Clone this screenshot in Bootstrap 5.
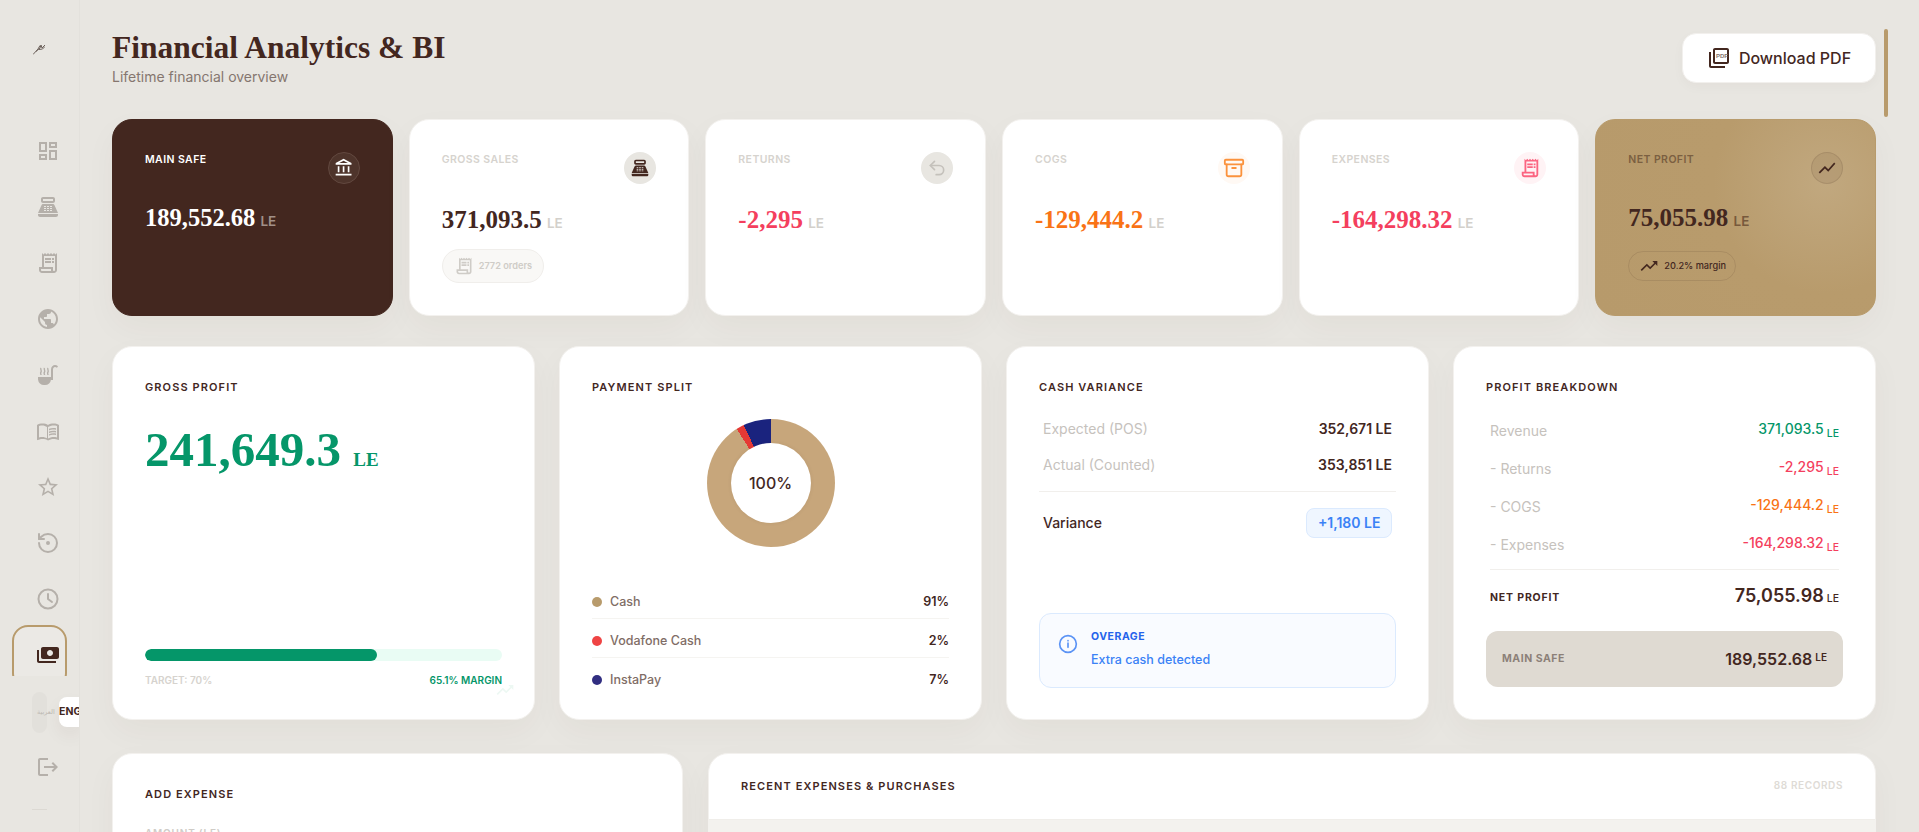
<!DOCTYPE html>
<html lang="en">
<head>
  <meta charset="UTF-8">
  <meta name="viewport" content="width=device-width, initial-scale=1.0">
  <title>Financial Analytics &amp; BI</title>
  <link href="https://cdn.jsdelivr.net/npm/bootstrap@5.3.0/dist/css/bootstrap.min.css" rel="stylesheet">
  <script src="https://cdn.jsdelivr.net/npm/bootstrap@5.3.0/dist/js/bootstrap.bundle.min.js"></script>
  <style>
    html, body { height: 832px; overflow: hidden; }
    body { background: #e8e6e1; color: #43271f; font-family: Inter, "Liberation Sans", sans-serif; }
    svg { display: block; flex: none; }
    .fill-icon { fill: currentColor; }
    .line-icon { fill: none; stroke: currentColor; stroke-width: 2; stroke-linecap: round; stroke-linejoin: round; }
    .serif-num { font-family: "Liberation Serif", serif; font-weight: 700; }

    /* sidebar */
    .side-bar { width: 80px; height: 832px; border-right: 1px solid #e3e1dc; color: #b5b0aa; flex: none; overflow: hidden; }
    .side-logo { padding: 43px 0 0 33px; height: 123px; color: #6d625c; }
    .side-link { height: 56px; padding-left: 36px; display: flex; align-items: center; color: #b5b0aa; }
    .side-clip { height: 51px; margin: -2px 0 0 12px; width: 55px; overflow: hidden; }
    .side-active { height: 64px; padding: 16px 0 0 22px; border: 2px solid #b89b6c; border-radius: 16px; background: #ebe9e5; color: #43271f; }
    .side-lang { height: 41px; margin-top: 16px; padding-left: 32px; display: flex; align-items: center; position: relative; }
    .lang-track { width: 15px; height: 41px; border-radius: 8px; background: #e2e0db; }
    .lang-ar { position: absolute; left: 37px; top: 15px; font-family: "DejaVu Sans", sans-serif; font-size: 6.5px; line-height: 10px; color: #bdb9b3; white-space: nowrap; }
    .lang-en { position: absolute; left: 59px; top: 5px; width: 21px; height: 30px; background: #fff; border-radius: 8px 0 0 8px; font-size: 10.5px; font-weight: 700; color: #43271f; line-height: 30px; box-shadow: 0 8px 18px rgba(67,39,31,.06); }
    .side-logout { margin-top: 6px; }
    .side-rule { width: 15px; border-top: 1px solid #dcd9d3; margin: 14px 0 0 32px; }

    /* main column */
    .main-pane { flex: 1; padding: 0 43px 0 32px; position: relative; height: 832px; overflow: hidden; }
    .scroll-thumb { position: absolute; right: 31px; top: 29px; width: 4px; height: 88px; border-radius: 2px; background: #b89b6c; }
    .page-head { height: 119px; padding-top: 33px; }
    .page-title { font-family: "Liberation Serif", serif; font-weight: 700; font-size: 31.500px; line-height: 30px; margin: 0; color: #43271f; }
    .page-sub { font-size: 14px; line-height: 18px; margin-top: 5px; color: #85766f; }
    .pdf-btn { width: 194px; height: 50px; border-radius: 14px; background: #fff; border: 1px solid #f2f0ed; color: #43271f; font-size: 16px; font-weight: 500; box-shadow: 0 4px 12px rgba(67,39,31,.03); }
    .pdf-btn:hover { background: #fff; color: #43271f; }
    .pdf-mark { font-size: 6px; font-family: "Liberation Sans", sans-serif; font-weight: 700; fill: #85766f; }

    .card-soft { border: 1px solid #f3f1ee; border-radius: 20px; background: #fff; box-shadow: 0 12px 32px rgba(67,39,31,.04); padding: 32px; }
    .stat-row { display: grid; grid-template-columns: repeat(6, 1fr); gap: 16px; height: 195px; margin-bottom: 32px; }
    .metric-row { display: grid; grid-template-columns: repeat(4, 1fr); gap: 24px; height: 374px; margin-bottom: 33px; }
    .bottom-row { display: grid; grid-template-columns: 571fr 1168fr; gap: 25px; }

    .stat-label { font-size: 10.5px; line-height: 14px; padding-top: 1px; font-weight: 600; letter-spacing: .04em; color: #d6d3ce; }
    .stat-bubble { width: 32px; height: 32px; border-radius: 50%; display: flex; align-items: center; justify-content: center; }
    .stat-value { font-size: 25px; line-height: 30px; margin-top: 21px; white-space: nowrap; }
    .stat-unit { font-family: Inter, sans-serif; font-size: 13.500px; font-weight: 600; color: #d3d0cb; margin-left: -1px; }
    .stat-pill { display: inline-flex; align-items: center; gap: 5px; height: 34px; margin-top: 11px; padding: 0 11px; border-radius: 17px; border: 1px solid #f0eeeb; background: #f9f8f6; color: #cfccc7; font-size: 9.200px; font-weight: 600; align-self: flex-start; white-space: nowrap; }

    .tone-dark { background: #43271f; border-color: #43271f; color: #fff; }
    .tone-dark .stat-label { color: #fff; }
    .tone-dark .stat-unit { color: #a19088; }
    .tone-dark .stat-bubble { background: #4e342b; border: 1px solid #62483f; color: #fff; }
    .tone-dark .stat-value { margin-top: 19px; font-size: 24.500px; }
    .tone-gold { background: radial-gradient(circle at 82% 32%, #c1a87f 0, #b89b6c 42%, #b79a6b 100%); border-color: #b89b6c; color: #43271f; }
    .tone-gold .stat-label { color: #7b5f41; }
    .tone-gold .stat-unit { color: #77593c; }
    .tone-gold .stat-value { margin-top: 19px; }
    .tone-gold .stat-bubble { background: rgba(67,39,31,.08); border: 1px solid rgba(67,39,31,.12); }
    .tone-gold .stat-pill { background: transparent; border-color: rgba(67,39,31,.12); color: #43271f; font-weight: 500; padding: 0 9px 0 10px; height: 30px; margin-top: 15px; border-radius: 15px; }

    .bubble-pos { background: #e8e6e1; color: #43271f; }
    .bubble-ret { background: #e8e6e1; color: #c4c1bb; }
    .bubble-cogs { background: #fff9f4; color: #fb923c; }
    .bubble-exp { background: #fff3f5; color: #fb6581; }
    .text-rose { color: #f43f5e; }
    .text-amber { color: #f97316; }
    .text-jade { color: #059669; }

    .block-title { font-size: 11px; line-height: 16px; font-weight: 600; letter-spacing: .1em; color: #43271f; margin: 0; }
    .gross-value { font-size: 49px; line-height: 56px; margin-top: 27px; color: #059669; white-space: nowrap; }
    .gross-unit { font-size: 19px; }
    .gross-bar { height: 12px; border-radius: 6px; background: #e9fcf4; }
    .gross-bar .progress-bar { background: #059669; border-radius: 6px; }
    .gross-foot { font-size: 10px; line-height: 14px; font-weight: 600; margin-top: 12px; }
    .gross-target { color: #d6d3ce; }
    .gross-mark { position: absolute; right: 19px; bottom: 19px; color: #edf8f3; fill: currentColor; }

    .donut-ring { width: 128px; height: 128px; border-radius: 50%; margin: 24px auto 0; background: conic-gradient(#c7a67b 0 91%, #e53935 91% 93%, #1a237e 93% 100%); display: flex; align-items: center; justify-content: center; }
    .donut-hole { width: 80px; height: 80px; border-radius: 50%; background: #fff; display: flex; align-items: center; justify-content: center; font-size: 16px; font-weight: 500; box-shadow: 0 0 4px rgba(67,39,31,.08); }
    .legend-row { font-size: 12.500px; line-height: 16px; padding-bottom: 8px; margin-bottom: 14px; border-bottom: 1px solid #f5f4f1; color: #7f6d66; font-weight: 500; }
    .legend-row:last-child { border-bottom: 0; padding-bottom: 0; margin-bottom: -1px; }
    .legend-dot { width: 10px; height: 10px; border-radius: 50%; }
    .legend-num { color: #43271f; font-weight: 600; }

    .calc-row { font-size: 14px; line-height: 20px; padding: 0 4px; color: #c6c2bd; }
    .calc-num { color: #43271f; font-weight: 600; }
    .calc-val { margin-top: -2px; font-weight: 500; }
    .calc-unit { font-size: 10.500px; font-weight: 500; margin-left: 3px; position: relative; top: 3px; }
    .hair-line { border-top: 1px solid #f1efec; }
    .variance-tag { height: 30px; padding: 0 10.500px; line-height: 28px; border-radius: 8px; background: #eff6ff; border: 1px solid #dbeafe; color: #3b82f6; font-size: 14px; font-weight: 600; }
    .note-box { height: 75px; border: 1px solid #dbeafe; border-radius: 12px; background: #f9fbff; padding: 16px 18px; margin-bottom: -1px; gap: 13px; }
    .note-icon { margin-top: 4px; fill: none; stroke: #5b93f5; stroke-width: 2; stroke-linecap: round; }
    .note-head { font-size: 10.500px; line-height: 14px; font-weight: 700; letter-spacing: .05em; color: #2563eb; }
    .note-text { font-size: 12.500px; line-height: 16px; font-weight: 500; color: #3b82f6; margin-top: 8px; }

    .break-first { margin-top: 26px; }
    .break-next { margin-top: 18px; }
    .break-rule { margin: 14px 4px 0; }
    .net-row { margin-top: 12px; line-height: 28px; }
    .net-label { font-size: 10.500px; font-weight: 700; letter-spacing: .08em; }
    .net-value { font-size: 18px; font-weight: 600; }
    .net-value .calc-unit { top: 0; }
    .safe-box { height: 56px; padding: 0 16px; border-radius: 12px; background: #dfdad2; margin-top: 18px; }
    .safe-label { font-size: 10.500px; font-weight: 700; letter-spacing: .05em; color: #8c8078; }
    .safe-value { font-size: 16px; font-weight: 600; color: #43271f; }
    .safe-unit { font-size: 10px; font-weight: 600; vertical-align: 4px; margin-left: 3px; }

    .add-card { height: 300px; }
    .field-label { font-size: 10px; letter-spacing: .08em; color: #cfccc7; font-weight: 600; margin-top: 24px; }
    .list-card { height: 300px; padding: 0; overflow: hidden; }
    .list-head { height: 65px; padding: 0 32px 2px; }
    .list-count { font-size: 10px; font-weight: 600; letter-spacing: .06em; color: #dedbd6; }
    .list-band { height: 60px; background: #f3f2ee; border-top: 1px solid #f0eeea; }
  </style>
</head>
<body>
  <svg width="0" height="0" class="position-absolute">
    <symbol id="ic-dash" viewBox="0 0 24 24"><path d="M19 5v2h-4V5h4M9 5v6H5V5h4m10 8v6h-4v-6h4M9 17v2H5v-2h4M21 3h-8v6h8V3zM11 3H3v10h8V3zm10 8h-8v10h8V11zm-10 4H3v6h8v-6z"/></symbol>
    <symbol id="ic-pos" viewBox="0 0 24 24"><path fill-rule="evenodd" d="M7 2h10c1.100 0 2 .9 2 2v2c0 1.100-.9 2-2 2H7c-1.100 0-2-.9-2-2V4c0-1.100.9-2 2-2zm0 2v2h10V4zM2 19h20v1c0 1.100-.9 2-2 2H4c-1.100 0-2-.9-2-2zM7.300 9h9.400c.8 0 1.500.5 1.830 1.190L22 18H2l3.470-7.810C5.790 9.470 6.510 9 7.300 9zM8 11v1h2v-1zm3 0v1h2v-1zm3 0v1h2v-1zM8 13v1h2v-1zm3 0v1h2v-1zm3 0v1h2v-1zM8 15v1h2v-1zm3 0v1h2v-1zm3 0v1h2v-1z"/></symbol>
    <symbol id="ic-receipt" viewBox="0 0 24 24"><path d="M19.500 3.500 18 2l-1.500 1.500L15 2l-1.500 1.500L12 2l-1.500 1.500L9 2 7.500 3.500 6 2v14H3v3c0 1.660 1.340 3 3 3h12c1.660 0 3-1.340 3-3V2l-1.500 1.500zM15 20H6c-.55 0-1-.45-1-1v-1h10v2zm4-1c0 .55-.45 1-1 1s-1-.45-1-1v-3H8V5h11v14z"/><path d="M9 7h6v2H9zm7 0h2v2h-2zm-7 3h6v2H9zm7 0h2v2h-2z"/></symbol>
    <symbol id="ic-globe" viewBox="0 0 24 24"><path d="M12 2C6.480 2 2 6.480 2 12s4.480 10 10 10 10-4.480 10-10S17.520 2 12 2zm-1 17.930c-3.950-.49-7-3.850-7-7.930 0-.62.08-1.210.21-1.790L9 15v1c0 1.100.9 2 2 2v1.930zm6.900-2.540c-.26-.81-1-1.390-1.900-1.390h-1v-3c0-.55-.45-1-1-1H8v-2h2c.55 0 1-.45 1-1V7h2c1.100 0 2-.9 2-2v-.41c2.930 1.190 5 4.060 5 7.410 0 2.080-.8 3.970-2.100 5.390z"/></symbol>
    <symbol id="ic-ladle" viewBox="0 0 24 24"><path d="M2 14h13v2.500a6 6 0 0 1-6 5.500H8a6 6 0 0 1-6-5.500z"/><path d="M15 17V6.500C15 3.500 17 2 19 2c1 0 2 .4 3 1.200l-1 1.600C20.300 4.300 19.700 4 19 4c-1.100 0-2 .9-2 2.500V17z"/><path d="M5 5c-1 1.500 1 2.500 0 4s0 2 0 3M8.500 5c-1 1.500 1 2.500 0 4s0 2 0 3M12 5c-1 1.500 1 2.500 0 4s0 2 0 3" fill="none" stroke="currentColor" stroke-width="1.400"/></symbol>
    <symbol id="ic-book" viewBox="0 0 24 24"><path fill-rule="evenodd" d="M21 5c-1.110-.35-2.330-.5-3.500-.5-1.950 0-4.050.4-5.500 1.500-1.450-1.100-3.550-1.500-5.500-1.500S2.450 4.900 1 6v14.650c0 .25.25.5.5.5.1 0 .15-.05.25-.05C3.100 20.450 5.050 20 6.500 20c1.950 0 4.050.4 5.500 1.500 1.350-.85 3.800-1.500 5.500-1.500 1.650 0 3.350.3 4.750 1.050.1.05.15.05.25.05.25 0 .5-.25.5-.5V6c-.6-.45-1.250-.75-2-1zm0 13.500c-1.100-.35-2.300-.5-3.500-.5-1.700 0-4.150.65-5.500 1.500V8c1.350-.85 3.800-1.500 5.500-1.500 1.200 0 2.400.15 3.500.5zM11 8c-1.350-.85-3-1.500-4.500-1.500-1.200 0-2.400.15-3.500.5v11.500c1.100-.35 2.300-.5 3.500-.5 1.700 0 3.150.6 4.500 1.300z"/><path d="M17.500 10.500c.88 0 1.730.09 2.500.26V9.240c-.79-.15-1.640-.24-2.500-.24-1.700 0-3.240.29-4.500.83v1.660c1.130-.64 2.700-.99 4.500-.99zM13 12.490v1.660c1.130-.64 2.700-.99 4.500-.99.88 0 1.730.09 2.500.26V11.900c-.79-.15-1.640-.24-2.500-.24-1.700 0-3.240.3-4.500.83zM17.500 14.330c-1.700 0-3.240.29-4.500.83v1.660c1.130-.64 2.700-.99 4.500-.99.88 0 1.730.09 2.500.26v-1.520c-.79-.16-1.640-.24-2.500-.24z"/></symbol>
    <symbol id="ic-star" viewBox="0 0 24 24"><path d="M22 9.240l-7.190-.62L12 2 9.190 8.630 2 9.240l5.460 4.730L5.820 21 12 17.270 18.180 21l-1.630-7.030L22 9.240zM12 15.400l-3.760 2.270 1-4.280-3.320-2.880 4.380-.38L12 6.100l1.710 4.040 4.380.38-3.320 2.880 1 4.280L12 15.400z"/></symbol>
    <symbol id="ic-money" viewBox="0 0 24 24"><path transform="matrix(-1 0 0 1 24 0)" d="M19 14V6c0-1.100-.9-2-2-2H3c-1.100 0-2 .9-2 2v8c0 1.100.9 2 2 2h14c1.100 0 2-.9 2-2zm-9-1c-1.660 0-3-1.340-3-3s1.340-3 3-3 3 1.340 3 3-1.340 3-3 3zm13-6v11c0 1.100-.9 2-2 2H4v-2h17V7h2z"/></symbol>
    <symbol id="ic-logout" viewBox="0 0 24 24"><path d="M17 7l-1.410 1.410L18.170 11H8v2h10.170l-2.580 2.580L17 17l5-5zM4 5h8V3H4c-1.100 0-2 .9-2 2v14c0 1.100.9 2 2 2h8v-2H4V5z"/></symbol>
    <symbol id="ic-bank" viewBox="0 0 24 24"><path d="M6.500 10h-2v7h2v-7zm6 0h-2v7h2v-7zm8.500 9H2v2h19v-2zm-2.500-9h-2v7h2v-7zm-7-6.740L16.710 6H6.290l5.210-2.740m0-2.260L2 6v2h19V6l-9.500-5z"/></symbol>
    <symbol id="ic-chart" viewBox="0 0 24 24"><path d="M3.500 18.490l6-6.010 4 4L22 6.920l-1.410-1.410-7.090 7.970-4-4L2 16.990z"/></symbol>
    <symbol id="ic-trend" viewBox="0 0 24 24"><path d="M16 6l2.290 2.290-4.880 4.880-4-4L2 16.590 3.410 18l6-6 4 4 6.300-6.290L22 12V6z"/></symbol>
  </svg>

  <div class="d-flex">
    <aside class="side-bar">
      <div class="side-logo">
        <svg width="12" height="12" viewBox="0 0 12 12" fill="none" stroke="currentColor" stroke-width="1"><path d="M0 11.500 5 6l2-3.500M3 8.500 7 5l1-3 1 3 3-3M6 6.500 9.500 6 12 3.500"/></svg>
      </div>
      <a class="side-link"><svg width="24" height="24" class="fill-icon"><use href="#ic-dash"/></svg></a>
      <a class="side-link"><svg width="24" height="24" class="fill-icon"><use href="#ic-pos"/></svg></a>
      <a class="side-link"><svg width="24" height="24" class="fill-icon"><use href="#ic-receipt"/></svg></a>
      <a class="side-link"><svg width="24" height="24" class="fill-icon"><use href="#ic-globe"/></svg></a>
      <a class="side-link"><svg width="24" height="24" class="fill-icon"><use href="#ic-ladle"/></svg></a>
      <a class="side-link"><svg width="24" height="24" class="fill-icon"><use href="#ic-book"/></svg></a>
      <a class="side-link"><svg width="24" height="24" class="fill-icon"><use href="#ic-star"/></svg></a>
      <a class="side-link"><svg width="24" height="24" viewBox="0 0 24 24" class="line-icon"><path d="M3 12a9 9 0 1 0 9-9 9.750 9.750 0 0 0-6.740 2.740L3 8"/><path d="M3 3v5h5"/><circle cx="12" cy="12" r="1" fill="currentColor"/></svg></a>
      <a class="side-link"><svg width="24" height="24" viewBox="0 0 24 24" class="line-icon"><circle cx="12" cy="12" r="9.500"/><path d="M12 7v5l4 3"/></svg></a>
      <div class="side-clip">
        <div class="side-active"><svg width="24" height="24" class="fill-icon"><use href="#ic-money"/></svg></div>
      </div>
      <div class="side-lang">
        <div class="lang-track"></div>
        <span class="lang-ar" lang="ar">العربية</span>
        <span class="lang-en">ENG</span>
      </div>
      <a class="side-link side-logout"><svg width="24" height="24" class="fill-icon"><use href="#ic-logout"/></svg></a>
      <div class="side-rule"></div>
    </aside>

    <main class="main-pane">
      <div class="scroll-thumb"></div>

      <header class="page-head d-flex justify-content-between align-items-start">
        <div>
          <h1 class="page-title">Financial Analytics &amp; BI</h1>
          <div class="page-sub">Lifetime financial overview</div>
        </div>
        <button class="btn pdf-btn d-flex align-items-center justify-content-center gap-2 p-0">
          <svg width="24" height="24" viewBox="0 0 24 24" class="fill-icon"><path d="M20 2H8c-1.100 0-2 .9-2 2v12c0 1.100.9 2 2 2h12c1.100 0 2-.9 2-2V4c0-1.100-.9-2-2-2zm0 14H8V4h12v12zM4 6H2v14c0 1.100.9 2 2 2h14v-2H4V6z"/><text x="9" y="12" class="pdf-mark">PDF</text></svg>
          Download PDF
        </button>
      </header>

      <section class="stat-row">
        <div class="card card-soft tone-dark">
          <div class="d-flex justify-content-between align-items-start">
            <span class="stat-label">MAIN SAFE</span>
            <span class="stat-bubble"><svg width="20" height="20" class="fill-icon"><use href="#ic-bank"/></svg></span>
          </div>
          <div class="stat-value serif-num">189,552.68 <span class="stat-unit">LE</span></div>
        </div>
        <div class="card card-soft">
          <div class="d-flex justify-content-between align-items-start">
            <span class="stat-label">GROSS SALES</span>
            <span class="stat-bubble bubble-pos"><svg width="20" height="20" class="fill-icon"><use href="#ic-pos"/></svg></span>
          </div>
          <div class="stat-value serif-num">371,093.5 <span class="stat-unit">LE</span></div>
          <div class="stat-pill"><svg width="20" height="20" class="fill-icon"><use href="#ic-receipt"/></svg>2772 orders</div>
        </div>
        <div class="card card-soft">
          <div class="d-flex justify-content-between align-items-start">
            <span class="stat-label">RETURNS</span>
            <span class="stat-bubble bubble-ret"><svg width="20" height="20" viewBox="0 0 24 24" class="line-icon"><path d="M9 14 4 9l5-5"/><path d="M4 9h10.500a5.500 5.500 0 0 1 0 11H11"/></svg></span>
          </div>
          <div class="stat-value serif-num text-rose">-2,295 <span class="stat-unit">LE</span></div>
        </div>
        <div class="card card-soft">
          <div class="d-flex justify-content-between align-items-start">
            <span class="stat-label">COGS</span>
            <span class="stat-bubble bubble-cogs"><svg width="22" height="22" viewBox="0 0 24 24" class="line-icon"><rect x="2" y="3" width="20" height="5" rx="1"/><path d="M4 8v11a2 2 0 0 0 2 2h12a2 2 0 0 0 2-2V8"/><path d="M10 12h4"/></svg></span>
          </div>
          <div class="stat-value serif-num text-amber">-129,444.2 <span class="stat-unit">LE</span></div>
        </div>
        <div class="card card-soft">
          <div class="d-flex justify-content-between align-items-start">
            <span class="stat-label">EXPENSES</span>
            <span class="stat-bubble bubble-exp"><svg width="22" height="22" class="fill-icon"><use href="#ic-receipt"/></svg></span>
          </div>
          <div class="stat-value serif-num text-rose">-164,298.32 <span class="stat-unit">LE</span></div>
        </div>
        <div class="card card-soft tone-gold">
          <div class="d-flex justify-content-between align-items-start">
            <span class="stat-label">NET PROFIT</span>
            <span class="stat-bubble"><svg width="20" height="20" class="fill-icon"><use href="#ic-chart"/></svg></span>
          </div>
          <div class="stat-value serif-num">75,055.98 <span class="stat-unit">LE</span></div>
          <div class="stat-pill"><svg width="20" height="20" class="fill-icon"><use href="#ic-trend"/></svg>20.2% margin</div>
        </div>
      </section>

      <section class="metric-row">
        <div class="card card-soft position-relative">
          <h2 class="block-title">GROSS PROFIT</h2>
          <div class="gross-value serif-num">241,649.3 <span class="gross-unit">LE</span></div>
          <div class="mt-auto">
            <div class="progress gross-bar"><div class="progress-bar" style="width: 65.1%"></div></div>
            <div class="gross-foot d-flex justify-content-between">
              <span class="gross-target">TARGET: 70%</span>
              <span class="text-jade">65.1% MARGIN</span>
            </div>
          </div>
          <svg class="gross-mark" width="20" height="20"><use href="#ic-trend"/></svg>
        </div>

        <div class="card card-soft">
          <h2 class="block-title">PAYMENT SPLIT</h2>
          <div class="donut-ring"><div class="donut-hole">100%</div></div>
          <div class="mt-auto">
            <div class="legend-row d-flex justify-content-between align-items-center">
              <span class="d-flex align-items-center gap-2"><span class="legend-dot" style="background: #b89b6c"></span>Cash</span><span class="legend-num">91%</span>
            </div>
            <div class="legend-row d-flex justify-content-between align-items-center">
              <span class="d-flex align-items-center gap-2"><span class="legend-dot" style="background: #ef4444"></span>Vodafone Cash</span><span class="legend-num">2%</span>
            </div>
            <div class="legend-row d-flex justify-content-between align-items-center">
              <span class="d-flex align-items-center gap-2"><span class="legend-dot" style="background: #312e81"></span>InstaPay</span><span class="legend-num">7%</span>
            </div>
          </div>
        </div>

        <div class="card card-soft">
          <h2 class="block-title">CASH VARIANCE</h2>
          <div class="calc-row d-flex justify-content-between mt-4"><span>Expected (POS)</span><span class="calc-num">352,671 LE</span></div>
          <div class="calc-row d-flex justify-content-between mt-3"><span>Actual (Counted)</span><span class="calc-num">353,851 LE</span></div>
          <div class="hair-line mt-3"></div>
          <div class="calc-row d-flex justify-content-between align-items-center mt-3">
            <span class="calc-num fw-medium">Variance</span>
            <span class="variance-tag">+1,180 LE</span>
          </div>
          <div class="note-box d-flex mt-auto">
            <svg class="note-icon" width="20" height="20" viewBox="0 0 24 24"><circle cx="12" cy="12" r="10"/><path d="M12 16v-5M12 8h.01"/></svg>
            <div>
              <div class="note-head">OVERAGE</div>
              <div class="note-text">Extra cash detected</div>
            </div>
          </div>
        </div>

        <div class="card card-soft">
          <h2 class="block-title">PROFIT BREAKDOWN</h2>
          <div class="calc-row d-flex justify-content-between break-first"><span>Revenue</span><span class="calc-val text-jade">371,093.5<span class="calc-unit">LE</span></span></div>
          <div class="calc-row d-flex justify-content-between break-next"><span>- Returns</span><span class="calc-val text-rose">-2,295<span class="calc-unit">LE</span></span></div>
          <div class="calc-row d-flex justify-content-between break-next"><span>- COGS</span><span class="calc-val text-amber">-129,444.2<span class="calc-unit">LE</span></span></div>
          <div class="calc-row d-flex justify-content-between break-next"><span>- Expenses</span><span class="calc-val text-rose">-164,298.32<span class="calc-unit">LE</span></span></div>
          <div class="hair-line break-rule"></div>
          <div class="calc-row net-row d-flex justify-content-between align-items-center">
            <span class="net-label calc-num">NET PROFIT</span>
            <span class="net-value calc-num">75,055.98<span class="calc-unit">LE</span></span>
          </div>
          <div class="safe-box d-flex justify-content-between align-items-center">
            <span class="safe-label">MAIN SAFE</span>
            <span class="safe-value">189,552.68<span class="safe-unit">LE</span></span>
          </div>
        </div>
      </section>

      <section class="bottom-row">
        <div class="card card-soft add-card">
          <h2 class="block-title">ADD EXPENSE</h2>
          <div class="field-label">AMOUNT (LE)</div>
        </div>
        <div class="card card-soft list-card">
          <div class="list-head d-flex justify-content-between align-items-center">
            <h2 class="block-title">RECENT EXPENSES &amp; PURCHASES</h2>
            <span class="list-count">88 RECORDS</span>
          </div>
          <div class="list-band"></div>
        </div>
      </section>
    </main>
  </div>
</body>
</html>
